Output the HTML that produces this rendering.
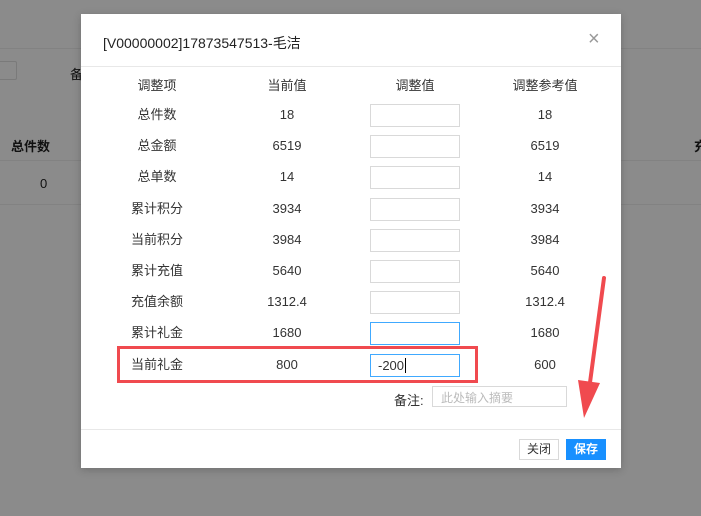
<!DOCTYPE html>
<html><head><meta charset="utf-8"><style>
*{margin:0;padding:0;box-sizing:border-box}
body{width:701px;height:516px;overflow:hidden;background:#8b8b8b;font-family:"Liberation Sans","Noto Sans CJK SC",sans-serif;position:relative;color:#333}
.a{position:absolute}
.bg-line{position:absolute;left:0;width:701px;height:1px;background:#828282}
.dlg{left:81px;top:14px;width:540px;height:454px;background:#fff;box-shadow:0 2px 8px rgba(0,0,0,.2)}
.c{position:absolute;font-size:13px;text-align:center;width:120px;color:#333;line-height:16px}
.in{position:absolute;left:289px;width:90px;height:23px;border:1px solid #d9d9d9;background:#fff}
</style></head><body>
<div class="bg-line" style="top:48px"></div>
<div class="bg-line" style="top:160px"></div>
<div class="bg-line" style="top:204px"></div>
<div class="a" style="left:-4px;top:61px;width:21px;height:19px;border:1px solid #7a7a7a;border-radius:2px"></div>
<div class="a" style="left:70px;top:64px;font-size:13px;color:#111">备</div>
<div class="a" style="left:11px;top:136px;font-size:13px;color:#111;font-weight:bold">总件数</div>
<div class="a" style="left:40px;top:176px;font-size:13px;color:#111">0</div>
<div class="a" style="left:694px;top:136px;font-size:13px;color:#111;font-weight:bold">充</div>
<div class="a dlg">
  <div class="a" style="left:22px;top:19px;font-size:14px;color:#222">[V00000002]17873547513-毛洁</div>
  <div class="a" style="left:507px;top:14px;font-size:20px;color:#999;font-weight:300">×</div>
  <div class="a" style="left:0;top:52px;width:540px;height:1px;background:#e8e8e8"></div>
  <div id="rows"></div>
  <div class="a" style="left:36px;top:332px;width:361px;height:37px;border:3px solid #f04a4f"></div>
  <div class="a" style="left:313px;top:376px;font-size:13px;color:#333">备注:</div>
  <div class="a" style="left:351px;top:372px;width:135px;height:21px;border:1px solid #d9d9d9;font-size:12px;color:#bbb;padding:2px 8px">此处输入摘要</div>
  <div class="a" style="left:0;top:415px;width:540px;height:1px;background:#e8e8e8"></div>
  <div class="a" style="left:438px;top:425px;width:40px;height:21px;border:1px solid #d9d9d9;font-size:12px;text-align:center;line-height:19px;color:#333">关闭</div>
  <div class="a" style="left:485px;top:425px;width:40px;height:21px;background:#1890ff;font-size:12px;text-align:center;line-height:21px;color:#fff;font-weight:bold">保存</div>
</div>
<svg class="a" style="left:570px;top:270px" width="50" height="160"><line x1="34" y1="8" x2="19" y2="120" stroke="#f04a4f" stroke-width="4" stroke-linecap="round"/><polygon points="8,110 30,113 14,148" fill="#f04a4f"/></svg>
<script>
var d=[["调整项","当前值","调整值","调整参考值"],["总件数","18","","18"],["总金额","6519","","6519"],["总单数","14","","14"],["累计积分","3934","","3934"],["当前积分","3984","","3984"],["累计充值","5640","","5640"],["充值余额","1312.4","","1312.4"],["累计礼金","1680","","1680"],["当前礼金","800","-200","600"]];
var h="",cx=[76,206,334,464];
d.forEach(function(r,i){var y=(i==0?64:93+(i-1)*31.2);
for(var j=0;j<4;j++){if(j==2&&i>0){var bc=i>=8?"#40a9ff":"#d9d9d9";h+='<div class="in" style="top:'+(y-3)+'px;border-color:'+bc+'"><span style="position:absolute;left:7px;top:3px;font-size:13px;color:#333">'+r[2]+(i==9?'<span style="border-left:1px solid #000;margin-left:1px"></span>':'')+'</span></div>';}
else h+='<div class="c" style="left:'+(cx[j]-60)+'px;top:'+y+'px">'+r[j]+'</div>';}});
document.getElementById("rows").innerHTML=h;
</script>
</body></html>
